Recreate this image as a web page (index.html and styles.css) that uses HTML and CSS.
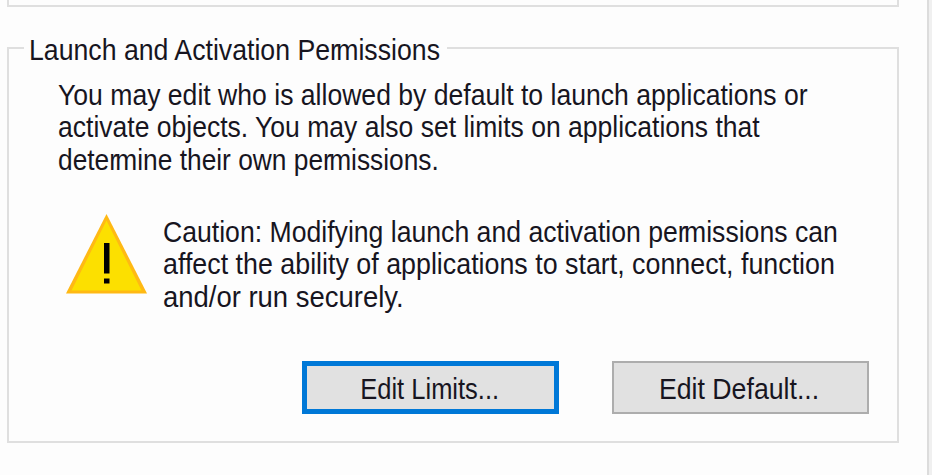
FILE: index.html
```html
<!DOCTYPE html>
<html lang="en">
<head>
<meta charset="utf-8">
<title>Default Security</title>
<link rel="stylesheet" href="styles.css">
</head>
<body>
<main class="sheet">
  <div class="previous-group"></div>
  <fieldset class="group">
    <legend><span class="line w-title">Launch and Activation Pe<span class="k">r</span>missions</span></legend>
    <p class="intro">
      <span class="line w-1">You may edit who is allowed by default to launch applications or</span>
      <span class="line w-2">activate objects. You may also set limits on applications that</span>
      <span class="line w-3">dete<span class="k">r</span>mine their own pe<span class="k">r</span>missions.</span>
    </p>
    <div class="caution">
      <svg class="warning" viewBox="0 0 82 82" width="82" height="82" aria-hidden="true">
        <path d="M41.500 1 82 80.500H1Z" fill="#ffb914"/>
        <path d="M41.500 7.500 76.500 77.500H6.500Z" fill="#fce000"/>
        <path d="M39 30H44.500V60.500H39ZM39 65.500H44.500V70.500H39Z" fill="#000"/>
      </svg>
      <p class="caution-text">
        <span class="line w-4">Caution: Modifying launch and activation pe<span class="k">r</span>missions can</span>
        <span class="line w-5">affect the ability of applications to start, connect, function</span>
        <span class="line w-6">and/or run securely.</span>
      </p>
    </div>
    <div class="actions">
      <button class="button primary"><span class="line w-7">Edit Limits...</span></button>
      <button class="button"><span class="line w-8">Edit Default...</span></button>
    </div>
  </fieldset>
</main>
</body>
</html>
```
FILE: styles.css
```css
* { box-sizing: border-box; }
body {
  margin: 0;
  height: 475px;
  overflow: hidden;
  background: #f0f0f0;
  color: #17151f;
  font: 30px/32.3px "Liberation Sans", Arial, sans-serif;
}
.sheet {
  width: 929px;
  height: 475px;
  padding-left: 7px;
  background: #fdfdfd;
  border-right: 2px solid #dcdcdc;
}
.previous-group {
  width: 892px;
  height: 7px;
  border: 2px solid #dfdfdf;
  border-top: 0;
}
.group {
  width: 892px;
  min-width: 0;
  height: 414px;
  margin: 22px 0 0;
  padding: 0;
  border: 2px solid #dfdfdf;
}
legend {
  width: 423px;
  height: 38px;
  margin-left: 15px;
  padding: 5px 0 0 5px;
}
.line {
  display: block;
  width: max-content;
  white-space: nowrap;
  transform-origin: left;
}
.k { letter-spacing: -3px; }
.w-title { transform: scaleX(.889); }
.w-1 { transform: scaleX(.886); }
.w-2 { transform: scaleX(.884); }
.w-3 { transform: scaleX(.877); }
.w-4 { transform: scaleX(.887); }
.w-5 { transform: scaleX(.894); }
.w-6 { transform: scaleX(.915); }
.w-7 { transform: scaleX(.85); }
.w-8 { transform: scaleX(.89); }
.intro { margin: 12px 0 0 49px; height: 97px; }
.caution {
  display: flex;
  margin: 37px 0 0 56px;
  height: 98px;
}
.warning { flex: none; }
.caution-text { margin: 3px 0 0 16px; }
.actions {
  display: flex;
  gap: 53px;
  margin: 50px 0 0 293px;
}
.button {
  display: flex;
  align-items: center;
  justify-content: center;
  width: 257px;
  height: 53px;
  padding: 3px 2px 0 0;
  border: 2px solid #adadad;
  border-radius: 0;
  background: #e1e1e1;
  color: inherit;
  font: inherit;
}
.button .line { transform-origin: center; }
.button.primary { border: 5px solid #0078d7; }
```
